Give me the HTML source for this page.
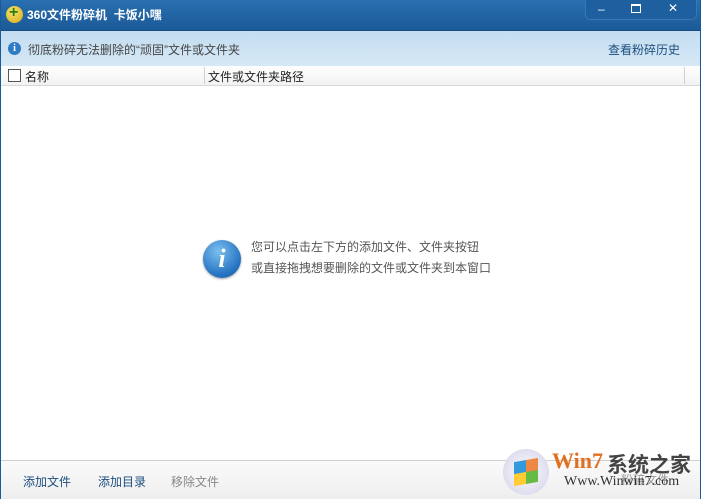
<!DOCTYPE html>
<html><head><meta charset="utf-8"><style>
*{margin:0;padding:0;box-sizing:border-box}
body{width:701px;height:499px;overflow:hidden;background:#fff;font-family:"Liberation Sans","Noto Sans CJK SC",sans-serif;font-size:12px;color:#333;position:relative}
.title{position:absolute;left:0;top:0;width:701px;height:31px;background:linear-gradient(#2a6fb0,#1b5a98);border-bottom:1px solid #164a80}
.title .t{position:absolute;left:27px;top:6px;color:#fff;font-weight:bold;font-size:12px}
.logo{position:absolute;left:6px;top:6px;width:17px;height:17px;border-radius:50%;background:radial-gradient(circle at 40% 35%,#f5e46a,#d7a818);}
.logo:after{content:"+";position:absolute;left:3px;top:-2px;color:#2d7a10;font-weight:bold;font-size:16px}
.btns{position:absolute;left:585px;top:0;width:112px;height:20px;background:#1d5f9f;border:1px solid #3a78b4;border-top:none;border-radius:0 0 5px 5px}
.btns span{position:absolute;color:#fff}
.info{position:absolute;left:1px;top:31px;width:699px;height:35px;background:linear-gradient(#c3ddf1,#d6e8f5)}
.info .i{position:absolute;left:7px;top:11px;width:13px;height:13px;border-radius:50%;background:#2e7cc6;color:#fff;font-size:10px;text-align:center;line-height:13px;font-weight:bold;font-family:"Liberation Serif",serif}
.info .a{position:absolute;left:27px;top:10px;color:#444}
.info .b{position:absolute;right:20px;top:10px;color:#1c4e7f}
.hdr{position:absolute;left:1px;top:66px;width:699px;height:20px;background:linear-gradient(#fff,#f2f2f2);border-bottom:1px solid #d8d8d8}
.hdr .cb{position:absolute;left:7px;top:3px;width:13px;height:13px;border:1px solid #555;background:#fff}
.hdr .n{position:absolute;left:24px;top:2px;color:#222}
.hdr .p{position:absolute;left:207px;top:2px;color:#222}
.hdr .s{position:absolute;left:203px;top:1px;width:1px;height:17px;background:#d0d0d0}
.hdr .s2{position:absolute;left:683px;top:1px;width:1px;height:17px;background:#d0d0d0}
.big{position:absolute;left:203px;top:240px;width:38px;height:38px;border-radius:50%;background:radial-gradient(circle at 40% 30%,#7cc0f0,#2270c0 70%,#1a5aa0);color:#fff;font-family:"Liberation Serif",serif;font-style:italic;font-weight:bold;font-size:26px;text-align:center;line-height:38px;box-shadow:0 1px 2px #999}
.msg{position:absolute;left:251px;top:237px;color:#555;line-height:21px;font-size:12px}
.foot{position:absolute;left:1px;top:460px;width:699px;height:39px;background:linear-gradient(#fafafa,#eeeeee);border-top:1px solid #d0d0d0}
.foot span{position:absolute;top:12px}
.edge{position:absolute;top:0;width:1px;height:499px;background:#1b5a98}
</style></head><body>
<div class="title"><div class="logo"></div><div class="t">360文件粉碎机&nbsp;&nbsp;卡饭小嘿</div>
<div class="btns"><span style="left:12px;top:2px">‒</span><span style="left:45px;top:4px;width:10px;height:9px;border:1px solid #fff;border-top-width:2px"></span><span style="left:82px;top:1px">✕</span></div></div>
<div class="info"><div class="i">i</div><div class="a">彻底粉碎无法删除的“顽固”文件或文件夹</div><div class="b">查看粉碎历史</div></div>
<div class="hdr"><div class="cb"></div><div class="n">名称</div><div class="s"></div><div class="p">文件或文件夹路径</div><div class="s2"></div></div>
<div class="big">i</div>
<div class="msg">您可以点击左下方的添加文件、文件夹按钮<br>或直接拖拽想要删除的文件或文件夹到本窗口</div>
<div class="foot"><span style="left:22px;color:#1c4e7f">添加文件</span><span style="left:97px;color:#1c4e7f">添加目录</span><span style="left:170px;color:#888">移除文件</span>
<span style="left:620px;top:10px;color:#999">粉碎文件</span>
<span style="left:502px;top:-12px;width:46px;height:46px;border-radius:50%;background:radial-gradient(circle,#fff,#dde 70%);"></span>
<span style="left:513px;top:-1px;width:24px;height:24px;background:conic-gradient(#e84 0 25%,#6b4 0 50%,#fc3 0 75%,#39d 0);transform:skewY(-10deg)"></span>
<span style="left:551px;top:-13px;color:#e07020;font-weight:bold;font-size:22px;font-family:'Liberation Serif',serif">Win7</span><span style="left:606px;top:-12px;color:#444;font-weight:bold;font-size:21px">系统之家</span>
<span style="left:563px;top:13px;color:#333;font-size:14px;font-family:'Liberation Serif',serif">Www.Winwin7.com</span></div>
<div class="edge" style="left:0"></div><div class="edge" style="left:700px"></div>
</body></html>
